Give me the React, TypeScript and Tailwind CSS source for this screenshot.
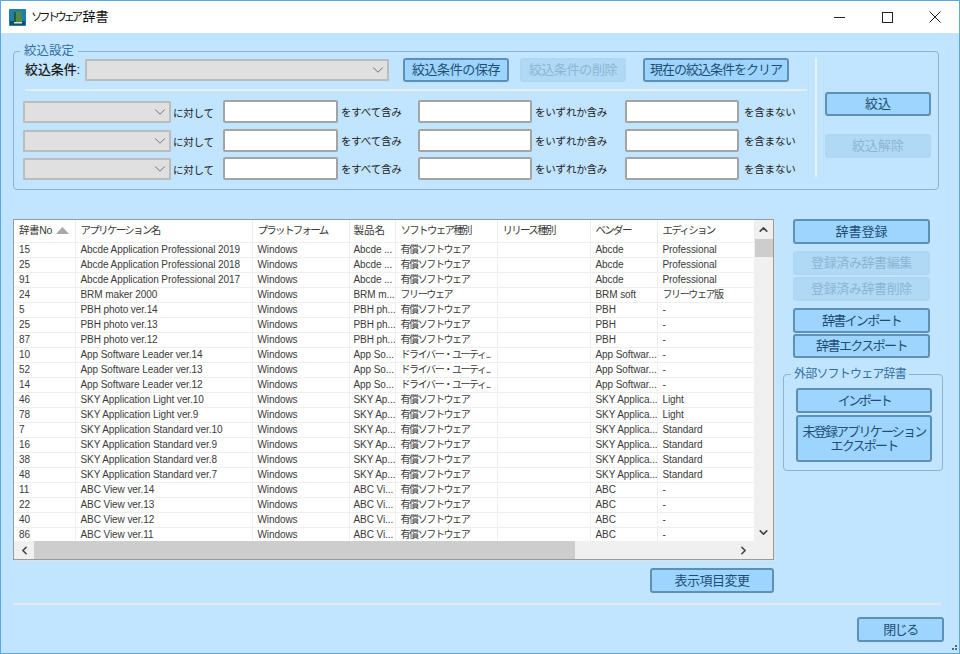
import type { ReactNode } from 'react'
import { ChevronDown, ChevronLeft, ChevronRight, ChevronUp } from 'lucide-react'

const rows = [
  ['15', 'Abcde Application Professional 2019', 'Windows', 'Abcde ...', '有償ソフトウェア', '', 'Abcde', 'Professional'],
  ['25', 'Abcde Application Professional 2018', 'Windows', 'Abcde ...', '有償ソフトウェア', '', 'Abcde', 'Professional'],
  ['91', 'Abcde Application Professional 2017', 'Windows', 'Abcde ...', '有償ソフトウェア', '', 'Abcde', 'Professional'],
  ['24', 'BRM maker 2000', 'Windows', 'BRM m...', 'フリーウェア', '', 'BRM soft', 'フリーウェア版'],
  ['5', 'PBH photo ver.14', 'Windows', 'PBH ph...', '有償ソフトウェア', '', 'PBH', '-'],
  ['25', 'PBH photo ver.13', 'Windows', 'PBH ph...', '有償ソフトウェア', '', 'PBH', '-'],
  ['87', 'PBH photo ver.12', 'Windows', 'PBH ph...', '有償ソフトウェア', '', 'PBH', '-'],
  ['10', 'App Software Leader ver.14', 'Windows', 'App So...', 'ドライバー・ユーティ...', '', 'App Softwar...', '-'],
  ['52', 'App Software Leader ver.13', 'Windows', 'App So...', 'ドライバー・ユーティ...', '', 'App Softwar...', '-'],
  ['14', 'App Software Leader ver.12', 'Windows', 'App So...', 'ドライバー・ユーティ...', '', 'App Softwar...', '-'],
  ['46', 'SKY Application Light ver.10', 'Windows', 'SKY Ap...', '有償ソフトウェア', '', 'SKY Applica...', 'Light'],
  ['78', 'SKY Application Light ver.9', 'Windows', 'SKY Ap...', '有償ソフトウェア', '', 'SKY Applica...', 'Light'],
  ['7', 'SKY Application Standard ver.10', 'Windows', 'SKY Ap...', '有償ソフトウェア', '', 'SKY Applica...', 'Standard'],
  ['16', 'SKY Application Standard ver.9', 'Windows', 'SKY Ap...', '有償ソフトウェア', '', 'SKY Applica...', 'Standard'],
  ['38', 'SKY Application Standard ver.8', 'Windows', 'SKY Ap...', '有償ソフトウェア', '', 'SKY Applica...', 'Standard'],
  ['48', 'SKY Application Standard ver.7', 'Windows', 'SKY Ap...', '有償ソフトウェア', '', 'SKY Applica...', 'Standard'],
  ['11', 'ABC View ver.14', 'Windows', 'ABC Vi...', '有償ソフトウェア', '', 'ABC', '-'],
  ['22', 'ABC View ver.13', 'Windows', 'ABC Vi...', '有償ソフトウェア', '', 'ABC', '-'],
  ['40', 'ABC View ver.12', 'Windows', 'ABC Vi...', '有償ソフトウェア', '', 'ABC', '-'],
  ['86', 'ABC View ver.11', 'Windows', 'ABC Vi...', '有償ソフトウェア', '', 'ABC', '-'],
]

const headers = ['アプリケーション名', 'プラットフォーム', '製品名', 'ソフトウェア種別', 'リリース種別', 'ベンダー', 'エディション']
const colWidths = [61, 177, 97, 46, 102, 93, 67, 97]

function Btn({ className, disabled, children }: { className: string; disabled?: boolean; children: ReactNode }) {
  return (
    <div
      className={`flex shrink-0 items-center justify-center rounded-[3px] border-2 text-center text-[13px] leading-[14px] whitespace-nowrap ${
        disabled
          ? 'border-[#aed7f3] bg-[#b0d9f6] text-[#8db5d3]'
          : 'border-[#5d90b6] bg-[#9dd5ff] text-[#1f4e74]'
      } ${className}`}
    >
      {children}
    </div>
  )
}

function Select({ className }: { className: string }) {
  return (
    <div className={`flex h-[22px] shrink-0 items-center justify-end rounded-[1px] border-2 border-[#bcbcbc] bg-[#e0e0e0] ${className}`}>
      <ChevronDown className="h-[18px] w-[18px] text-[#6f6f6f]" strokeWidth={1.3} />
    </div>
  )
}

function FilterRow({ className }: { className: string }) {
  const label = 'shrink-0 text-[10.5px] leading-[14px] tracking-[-0.2px] text-[#1c1c1c]'
  const input = 'h-[23px] shrink-0 rounded-[2px] border-2 border-[#a4a4a4] bg-white'
  return (
    <div className={`flex h-[23px] items-center ${className}`}>
      <Select className="w-[148px]" />
      <span className={`${label} w-[52px] pt-[2px] pl-[2px]`}>に対して</span>
      <div className={`${input} w-[115px]`} />
      <span className={`${label} w-[80px] pl-[3px]`}>をすべて含み</span>
      <div className={`${input} w-[114px]`} />
      <span className={`${label} w-[93px] pl-[3px]`}>をいずれか含み</span>
      <div className={`${input} w-[114px]`} />
      <span className={`${label} pl-[5px]`}>を含まない</span>
    </div>
  )
}

function DictTable() {
  return (
    <div className="flex h-[341px] flex-col border border-[#9a9a9a] bg-white shadow-[1px_1px_0_#d8e4ec]">
      <div className="flex h-[321px] overflow-hidden">
        <table className="w-[740px] shrink-0 table-fixed border-collapse self-start text-[10px] tracking-[-0.08px] text-[#3a3a3a]">
          <colgroup>
            {colWidths.map((w, i) => (
              <col key={i} style={{ width: w }} />
            ))}
          </colgroup>
          <thead>
            <tr className="h-[22px] text-left text-[10.5px] font-normal text-[#3a3a3a]">
              <th className="border-r border-[#ececec] pl-[5px] font-normal tracking-[-0.4px]">
                <span className="flex items-center">
                  辞書No
                  <svg className="ml-[4px] h-[7px] w-[13px]" viewBox="0 0 13 7">
                    <path d="M6.5 0 13 7H0Z" fill="#a8a8a8" />
                  </svg>
                </span>
              </th>
              {headers.map(h => (
                <th
                  key={h}
                  className={`border-r border-[#ececec] font-normal ${
                    h === '製品名' ? 'pl-[4px] tracking-[0px]' : 'pl-[5px] tracking-[-1.7px]'
                  }`}
                >
                  {h}
                </th>
              ))}
            </tr>
          </thead>
          <tbody>
            {rows.map((row, i) => (
              <tr key={i} className="h-[15px] border-t border-[#efefef]">
                {row.map((cell, j) => (
                  <td
                    key={j}
                    className={`overflow-hidden border-r border-[#f0f0f0] p-0 leading-[14px] whitespace-nowrap ${j === 3 ? 'pl-[4px]' : 'pl-[5px]'} ${
                      /[^\x00-\x7f]/.test(cell) ? 'tracking-[-1.4px]' : ''
                    }`}
                  >
                    {cell}
                  </td>
                ))}
              </tr>
            ))}
          </tbody>
        </table>
        <div className="flex w-[18px] shrink-0 flex-col items-center bg-[#f0f0f0]">
          <ChevronUp className="mt-[3px] h-[13px] w-[13px] text-[#444]" strokeWidth={3} />
          <div className="mt-[3px] h-[18px] w-full bg-[#cdcdcd]" />
          <ChevronDown className="mt-auto mb-[2px] h-[13px] w-[13px] text-[#444]" strokeWidth={3} />
        </div>
        <div className="w-[1px] shrink-0 bg-white" />
      </div>
      <div className="flex h-[18px] items-center bg-[#f0f0f0]">
        <div className="flex h-full w-[20px] shrink-0 items-center justify-center">
          <ChevronLeft className="h-[13px] w-[13px] text-[#444]" strokeWidth={3} />
        </div>
        <div className="h-full w-[541px] bg-[#cdcdcd]" />
        <ChevronRight className="ml-[162px] h-[13px] w-[13px] text-[#444]" strokeWidth={3} />
      </div>
    </div>
  )
}

export default function App() {
  return (
    <div
      className="flex h-[654px] w-[960px] flex-col overflow-hidden border border-[#5aa7e2] bg-[#c2e5ff]"
      style={{ fontFamily: '"Liberation Sans", "Noto Sans CJK JP", sans-serif' }}
    >
      {/* Title bar */}
      <div className="flex h-[32px] shrink-0 items-center bg-white">
        <svg className="ml-[8px] h-[17px] w-[17px]" viewBox="0 0 17 17">
          <rect width="17" height="17" rx="1" fill="#1f7fa8" />
          <rect x="1" y="12" width="15" height="4" fill="#14506e" />
          <path d="M5 3h8v10H5z" fill="#4f8a4a" />
          <path d="M5 3h2v10H5z" fill="#2c5a2e" />
          <path d="M5 13h8v1.5H5z" fill="#d8e4d0" />
        </svg>
        <span className="ml-[5px] text-[13px] whitespace-nowrap text-[#111]">
          <span className="text-[11.5px] tracking-[-3.4px]">ソフトウェア</span>
          <span className="ml-[3px]">辞書</span>
        </span>
        <div className="ml-auto flex">
          <div className="flex h-[32px] w-[48px] items-center justify-center">
            <div className="h-[1px] w-[11px] bg-[#222]" />
          </div>
          <div className="flex h-[32px] w-[48px] items-center justify-center">
            <div className="h-[11px] w-[11px] border border-[#222]" />
          </div>
          <div className="flex h-[32px] w-[48px] items-center justify-center">
            <svg className="h-[12px] w-[12px]" viewBox="0 0 12 12">
              <path d="M.5.5l11 11M11.5.5l-11 11" stroke="#222" fill="none" />
            </svg>
          </div>
        </div>
      </div>

      <div className="relative flex-1">
        {/* Filter group */}
        <div className="relative mt-[18px] ml-[12px] flex h-[139px] w-[926px] rounded-[4px] border border-[#8fb3cc] pt-[6px] pl-[9px]">
          <span className="absolute -top-[8px] left-[6px] bg-[#c2e5ff] px-[4px] text-[12.5px] leading-[14px] text-[#2f6ea3]">絞込設定</span>
          <div className="w-[784px] shrink-0">
            <div className="flex h-[24px] items-center">
              <span className="ml-[2px] w-[60px] shrink-0 text-[13px] font-medium tracking-[-0.1px] text-[#1c1c1c]">絞込条件:</span>
              <Select className="w-[304px]" />
              <Btn className="ml-[14px] h-[24px] w-[106px] tracking-[-0.4px]">絞込条件の保存</Btn>
              <Btn disabled className="ml-[11px] h-[24px] w-[106px] tracking-[-0.4px]">絞込条件の削除</Btn>
              <Btn className="ml-[17px] h-[24px] w-[146px] tracking-[-1px]">現在の絞込条件をクリア</Btn>
            </div>
            <div className="mt-[7px] ml-[2px] h-[2px] bg-[#e6eef3]" />
            <FilterRow className="mt-[9px]" />
            <FilterRow className="mt-[6px]" />
            <FilterRow className="mt-[5px]" />
          </div>
          <div className="ml-[8px] h-[119px] w-[2px] shrink-0 bg-[#e8f0f5]" />
          <div className="ml-[8px] w-[106px] shrink-0">
            <Btn className="mt-[34px] h-[24px] w-[106px]">絞込</Btn>
            <Btn disabled className="mt-[18px] h-[24px] w-[106px]">絞込解除</Btn>
          </div>
        </div>

        {/* Table and side buttons */}
        <div className="mt-[29px] ml-[12px] flex">
          <div className="flex w-[761px] shrink-0 flex-col">
            <DictTable />
            <Btn className="mt-[8px] ml-auto h-[25px] w-[124px] tracking-[-0.5px]">表示項目変更</Btn>
          </div>
          <div className="ml-[9px] flex w-[160px] shrink-0 flex-col">
            <Btn className="ml-[10px] h-[25px] w-[137px]">辞書登録</Btn>
            <Btn disabled className="mt-[7px] ml-[10px] h-[24px] w-[137px] tracking-[-0.4px]">登録済み辞書編集</Btn>
            <Btn disabled className="mt-[2px] ml-[10px] h-[24px] w-[137px] tracking-[-0.4px]">登録済み辞書削除</Btn>
            <Btn className="mt-[7px] ml-[10px] h-[25px] w-[137px] tracking-[-1.7px]">辞書インポート</Btn>
            <Btn className="mt-[1px] ml-[10px] h-[24px] w-[137px] tracking-[-1.6px]">辞書エクスポート</Btn>
            <div className="relative mt-[16px] h-[97px] rounded-[4px] border border-[#8fb3cc] pt-[13px] pl-[12px]">
              <span className="absolute -top-[8px] left-[7px] bg-[#c2e5ff] px-[3px] text-[12px] leading-[14px] tracking-[-0.8px] whitespace-nowrap text-[#2f6ea3]">外部ソフトウェア辞書</span>
              <Btn className="h-[25px] w-[136px] tracking-[-2.5px]">インポート</Btn>
              <Btn className="mt-[2px] h-[47px] w-[136px] tracking-[-1.8px]">
                未登録アプリケーション
                <br />
                エクスポート
              </Btn>
            </div>
          </div>
        </div>

        {/* Footer */}
        <div className="mt-[10px] ml-[12px] h-[2px] w-[928px] bg-[#e2e8ec]" />
        <div className="mt-[12px] flex justify-end pr-[15px]">
          <Btn className="h-[25px] w-[87px] tracking-[-1.5px]">閉じる</Btn>
        </div>
        <svg className="absolute right-[1px] bottom-[1px] h-[8px] w-[8px]" viewBox="0 0 8 8">
          <path d="M5 1h2v2H5zM2 4h2v2H2zM5 4h2v2H5z" fill="#4d6f88" />
        </svg>
      </div>
    </div>
  )
}
